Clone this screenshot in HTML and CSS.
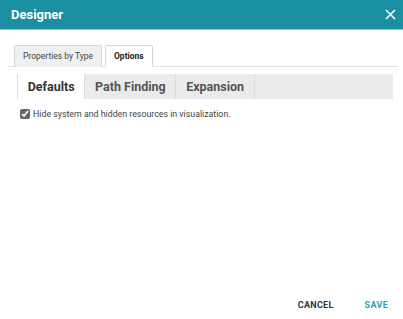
FILE: index.html
```html
<!DOCTYPE html>
<html lang="en">
<head>
    <meta charset="UTF-8">
    <title>Designer</title>
    <link rel="stylesheet" href="styles.css">
</head>
<body>
    <div class="dialog">
        <div class="header">
            <span class="title">Designer</span>
            <svg class="close" width="11" height="11" viewBox="0 0 11 11">
                <path d="M1 1L10 10M10 1L1 10" stroke="#fff" stroke-width="1.6"/>
            </svg>
        </div>

        <div class="body">
            <div class="tabs">
                <div class="tab">Properties by Type</div>
                <div class="tab active">Options</div>
            </div>

            <div class="subtabs">
                <div class="subtab active">Defaults</div>
                <div class="subtab">Path Finding</div>
                <div class="subtab">Expansion</div>
            </div>

            <label class="option">
                <input type="checkbox" checked>
                Hide system and hidden resources in visualization.
            </label>
        </div>

        <div class="footer">
            <button class="btn">CANCEL</button>
            <button class="btn primary">SAVE</button>
        </div>
    </div>
</body>
</html>
```

FILE: styles.css
```css
body {
    margin: 0;
    font-family: Roboto, 'Liberation Sans', sans-serif;
    background: #fff;
    color: #333;
}

.dialog {
    width: 403px;
    height: 319px;
    display: flex;
    flex-direction: column;
}

.header {
    height: 30px;
    background: #1a8fa1;
    border-bottom: 1px solid #8cc7d0;
    display: flex;
    align-items: center;
    justify-content: space-between;
    padding: 0 7px 0 11px;
    box-sizing: border-box;
}

.title {
    color: #fff;
    font-size: 13px;
    font-weight: bold;
}

.body {
    flex: 1;
    padding: 15px 5px 0 8px;
}

.tabs {
    display: flex;
    gap: 3px;
    padding-left: 6px;
    border-bottom: 1px solid #dde3e8;
}

.tab {
    font-size: 8.5px;
    color: #444;
    padding: 5px 8px 5px;
    border: 1px solid #d5d8da;
    border-bottom: none;
    background: #eef0f2;
    border-radius: 2px 2px 0 0;
    margin-bottom: -1px;
}

.tab.active {
    background: #fff;
    font-weight: bold;
    color: #222;
    border-bottom: 1px solid #fff;
}

.subtabs {
    display: flex;
    margin: 7px 5px 0 9px;
    background: #ebebeb;
    border-left: 1px solid #ddd;
}

.subtab {
    font-size: 12.5px;
    font-weight: bold;
    color: #555;
    padding: 5px 9.7px 5px;
    border-right: 1px solid #dcdcdc;
}

.subtab.active {
    background: #fff;
    color: #333;
}

.option {
    display: flex;
    align-items: center;
    gap: 3px;
    margin: 10px 0 0 12px;
    font-size: 8.8px;
    color: #444;
}

.option input {
    width: 10px;
    height: 10px;
    margin: 0;
    accent-color: #666;
}

.footer {
    display: flex;
    justify-content: flex-end;
    gap: 31px;
    padding: 0 15px 9px 0;
}

.btn {
    background: none;
    border: none;
    font-family: Roboto, 'Liberation Sans', sans-serif;
    font-size: 9px;
    font-weight: bold;
    color: #333;
    padding: 0;
    letter-spacing: 0.3px;
}

.btn.primary {
    color: #2a9fb5;
}
```
